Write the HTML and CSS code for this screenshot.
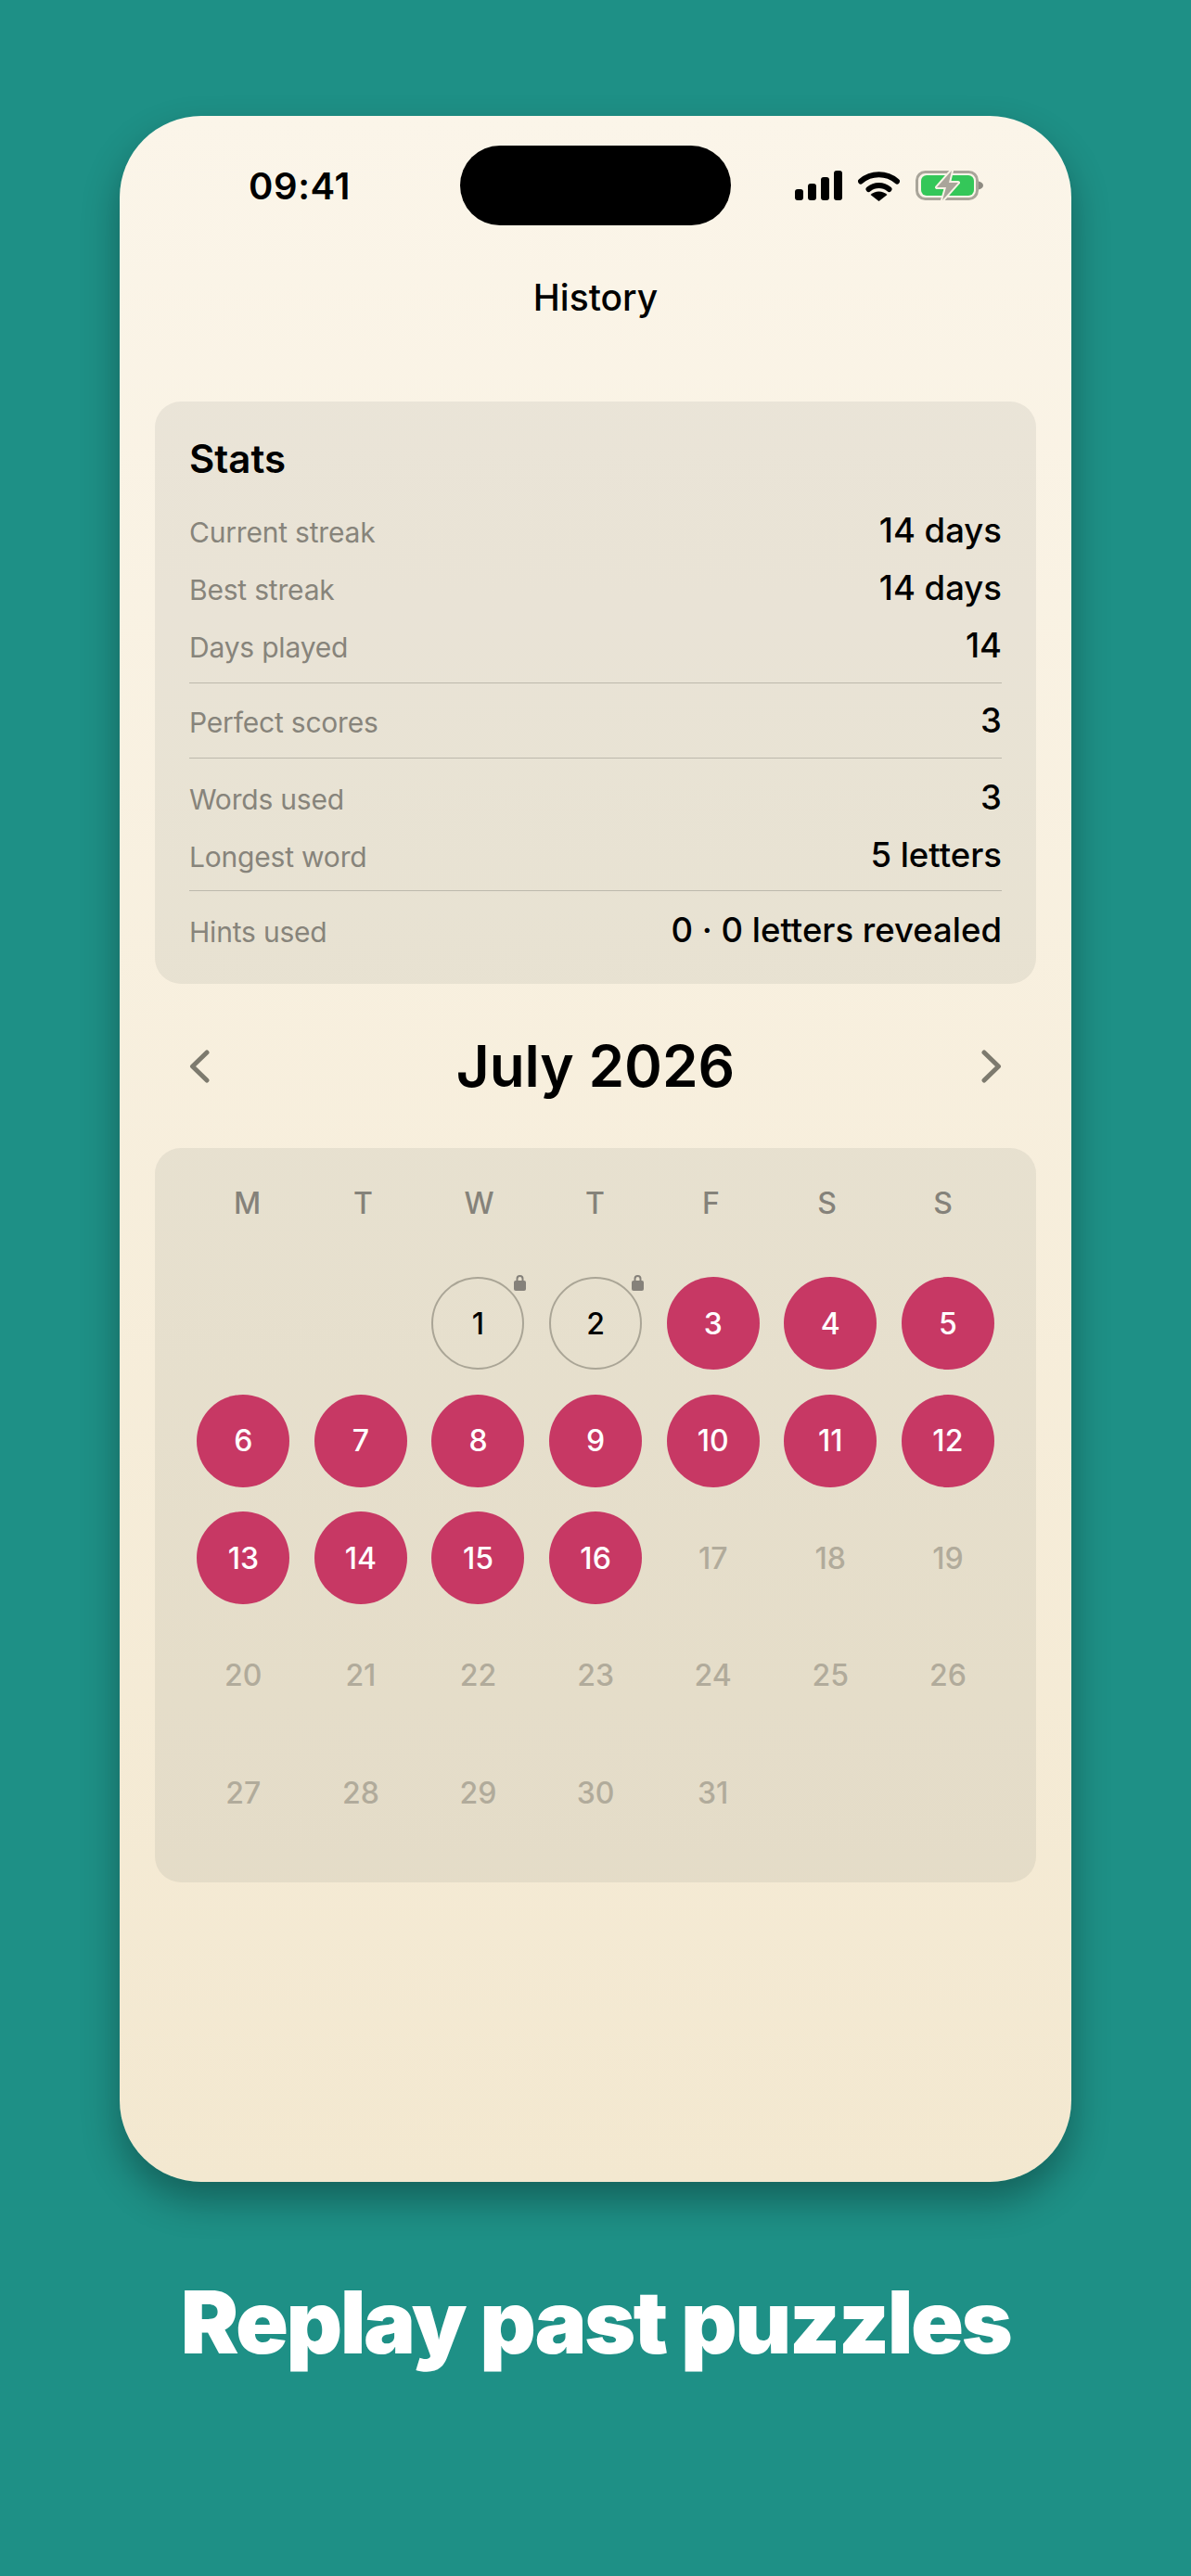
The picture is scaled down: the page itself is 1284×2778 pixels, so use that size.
FILE: index.html
```html
<!DOCTYPE html>
<html lang="en">
<head>
<meta charset="utf-8">
<title>History</title>
<link rel="stylesheet" href="styles.css">
</head>
<body>
<main class="phone">
  <header class="status">
    <span class="time">09:41</span>
    <div class="island"></div>
    <div class="status-icons">
      <svg class="i-signal" viewBox="0 0 51 32" width="51" height="32"><rect x="0" y="20" width="9" height="12" rx="3"/><rect x="14" y="14" width="9" height="18" rx="3"/><rect x="28" y="7" width="9" height="25" rx="3"/><rect x="42" y="0" width="9" height="32" rx="3"/></svg>
      <svg class="i-wifi" viewBox="0 0 45 33" width="45" height="33"><path d="M3 11.5A30 30 0 0 1 42 11.5" fill="none" stroke="#000" stroke-width="6" stroke-linecap="round"/><path d="M11.5 20A17 17 0 0 1 33.500 20" fill="none" stroke="#000" stroke-width="6" stroke-linecap="round"/><path d="M22.500 33L13.500 26A13 13 0 0 1 31.500 26Z"/></svg>
      <svg class="i-batt" viewBox="0 0 73 34" width="73" height="34"><rect x="1.500" y="2.500" width="65" height="29" rx="9" fill="none" stroke="#a9a59a" stroke-width="3"/><rect x="6" y="6" width="57" height="22" rx="6" fill="#34c759"/><path d="M68 12.500C71 13 73 15 73 17S71 21 68 21.500Z" fill="#8e8b82"/><path d="M39 1L23 19H33L29 33L46 14H36Z" fill="#a9a59a" stroke="#f9f3e6" stroke-width="4" paint-order="stroke" stroke-linejoin="round"/></svg>
    </div>
  </header>

  <h1 class="title">History</h1>

  <section class="card stats">
    <h2 class="stats-title">Stats</h2>
    <div class="group">
      <div class="row"><span class="label">Current streak</span><span class="value">14 days</span></div>
      <div class="row"><span class="label">Best streak</span><span class="value">14 days</span></div>
      <div class="row"><span class="label">Days played</span><span class="value">14</span></div>
    </div>
    <hr class="divider">
    <div class="group">
      <div class="row"><span class="label">Perfect scores</span><span class="value">3</span></div>
    </div>
    <hr class="divider">
    <div class="group group-words">
      <div class="row"><span class="label">Words used</span><span class="value">3</span></div>
      <div class="row"><span class="label">Longest word</span><span class="value">5 letters</span></div>
    </div>
    <hr class="divider">
    <div class="group group-hints">
      <div class="row"><span class="label">Hints used</span><span class="value">0 · 0 letters revealed</span></div>
    </div>
  </section>

  <nav class="month">
    <svg class="chev" viewBox="0 0 22 36" width="22" height="36"><path d="M19 3L3.500 18L19 33"/></svg>
    <h2 class="month-name">July 2026</h2>
    <svg class="chev" viewBox="0 0 22 36" width="22" height="36"><path d="M3 3L18.500 18L3 33"/></svg>
  </nav>

  <section class="card calendar">
    <div class="weekdays"><span>M</span><span>T</span><span>W</span><span>T</span><span>F</span><span>S</span><span>S</span></div>
    <div class="days">
      <span class="cell"></span>
      <span class="cell"></span>
      <span class="cell"><span class="day locked">1<svg class="lock" viewBox="0 0 13 18" width="13" height="18"><path class="lock-arc" d="M3.500 8V5A3 3 0 0 1 9.500 5V8"/><rect x="0" y="7" width="13" height="11" rx="2"/></svg></span></span>
      <span class="cell"><span class="day locked">2<svg class="lock" viewBox="0 0 13 18" width="13" height="18"><path class="lock-arc" d="M3.500 8V5A3 3 0 0 1 9.500 5V8"/><rect x="0" y="7" width="13" height="11" rx="2"/></svg></span></span>
      <span class="cell"><span class="day done">3</span></span>
      <span class="cell"><span class="day done">4</span></span>
      <span class="cell"><span class="day done">5</span></span>
      <span class="cell"><span class="day done">6</span></span>
      <span class="cell"><span class="day done">7</span></span>
      <span class="cell"><span class="day done">8</span></span>
      <span class="cell"><span class="day done">9</span></span>
      <span class="cell"><span class="day done">10</span></span>
      <span class="cell"><span class="day done">11</span></span>
      <span class="cell"><span class="day done">12</span></span>
      <span class="cell"><span class="day done">13</span></span>
      <span class="cell"><span class="day done">14</span></span>
      <span class="cell"><span class="day done">15</span></span>
      <span class="cell"><span class="day done">16</span></span>
      <span class="cell"><span class="day future">17</span></span>
      <span class="cell"><span class="day future">18</span></span>
      <span class="cell"><span class="day future">19</span></span>
      <span class="cell"><span class="day future">20</span></span>
      <span class="cell"><span class="day future">21</span></span>
      <span class="cell"><span class="day future">22</span></span>
      <span class="cell"><span class="day future">23</span></span>
      <span class="cell"><span class="day future">24</span></span>
      <span class="cell"><span class="day future">25</span></span>
      <span class="cell"><span class="day future">26</span></span>
      <span class="cell"><span class="day future">27</span></span>
      <span class="cell"><span class="day future">28</span></span>
      <span class="cell"><span class="day future">29</span></span>
      <span class="cell"><span class="day future">30</span></span>
      <span class="cell"><span class="day future">31</span></span>
    </div>
  </section>
</main>
<p class="caption">Replay past puzzles</p>
</body>
</html>
```
FILE: styles.css
```css
* { box-sizing: border-box; }
html, body { margin: 0; padding: 0; }
body {
  width: 1284px;
  height: 2778px;
  overflow: hidden;
  padding-top: 125px;
  background: #1e9086;
  font-family: Inter, "Liberation Sans", sans-serif;
  color: #000;
}
.phone {
  width: 1026px;
  height: 2228px;
  margin: 0 auto;
  padding: 32px 38px 0;
  border-radius: 88px;
  background: linear-gradient(180deg, #fbf5e9 0%, #f3e8d0 100%);
  box-shadow: 0 20px 40px rgba(0, 0, 0, 0.32);
}
.status {
  display: grid;
  grid-template-columns: 1fr 292px 1fr;
  align-items: center;
  height: 86px;
  margin: 0 -38px;
}
.time {
  justify-self: start;
  margin-left: 139px;
  font-size: 40px;
  font-weight: 600;
  letter-spacing: 0.6px;
}
.island { height: 86px; border-radius: 43px; background: #000; }
.status-icons {
  display: flex;
  align-items: center;
  gap: 17px;
  margin-left: 69px;
}
.status-icons svg { display: block; flex: none; }
.title {
  margin: 53px 0 87px;
  height: 50px;
  line-height: 50px;
  font-size: 39px;
  font-weight: 500;
  text-align: center;
}
.card { background: rgba(30, 48, 40, 0.07); border-radius: 28px; }
.stats {
  display: flex;
  flex-direction: column;
  gap: 20px;
  margin: 0;
  padding: 38px 37px;
  width: 950px;
}
.stats-title {
  margin: 0 0 13px;
  height: 48px;
  line-height: 48px;
  font-size: 42px;
  font-weight: 600;
}
.group { display: flex; flex-direction: column; gap: 22px; }
.group-words { margin: 2px 0 -2px; }
.group-hints { margin-top: 2px; }
.row {
  display: flex;
  justify-content: space-between;
  align-items: baseline;
  height: 40px;
  line-height: 40px;
}
.label { font-size: 30px; letter-spacing: -0.2px; color: #87847b; }
.value { font-size: 36.5px; font-weight: 500; }
.divider { width: 100%; height: 1px; margin: 0; border: 0; background: #bdb9ac; }
.month {
  display: flex;
  align-items: center;
  justify-content: space-between;
  height: 100px;
  margin: 39px 0 38px;
  padding: 0 37px;
}
.month-name { margin: 0; font-size: 62px; font-weight: 600; line-height: 100px; }
.chev { display: block; fill: none; stroke: #7d7a6e; stroke-width: 5; stroke-linecap: round; stroke-linejoin: round; }
.calendar { width: 950px; height: 792px; padding: 35px 32px; }
.weekdays {
  display: grid;
  grid-template-columns: repeat(7, 125px);
  height: 48px;
  margin: 0 5px 43px;
  align-items: center;
  text-align: center;
  font-size: 32px;
  font-weight: 500;
  color: #85827a;
}
.days { display: grid; grid-template-columns: repeat(7, 126.6px); grid-auto-rows: 126.5px; }
.cell { display: flex; align-items: center; justify-content: center; }
.day {
  position: relative;
  display: flex;
  align-items: center;
  justify-content: center;
  width: 100px;
  height: 100px;
  border-radius: 50%;
  font-size: 32px;
  font-weight: 500;
}
.done { background: #c73864; color: #fff; }
.locked { border: 2px solid #aaa596; }
.future { color: #b1ab9b; }
.lock { position: absolute; top: -5px; right: -4px; fill: #85817a; }
.lock-arc { fill: none; stroke: #85817a; stroke-width: 2; }
.caption {
  margin: 95px 0 0;
  text-align: center;
  font-size: 94px;
  line-height: 112px;
  font-weight: 900;
  color: #fff;
  letter-spacing: -2.5px;
}
```
